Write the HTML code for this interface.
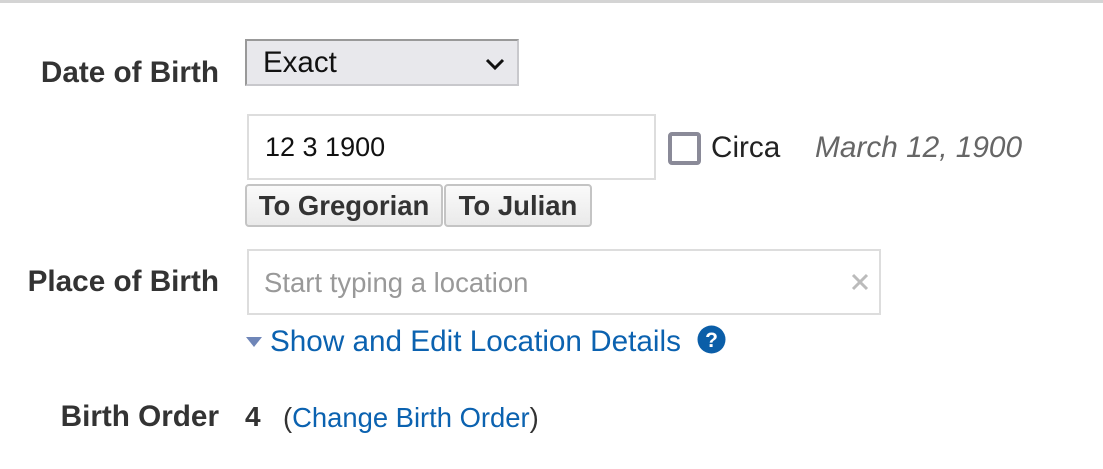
<!DOCTYPE html>
<html><head><style>
body{margin:0;width:1103px;height:469px;background:#fff;position:relative;overflow:hidden;font-family:"Liberation Sans",Arial,sans-serif;}
.a{position:absolute;white-space:nowrap;}
.lbl{font-weight:bold;font-size:29.7px;color:#333;right:884px;}
.box{position:absolute;box-sizing:border-box;border:2px solid #ddd;background:#fff;}
.btn{position:absolute;box-sizing:border-box;border:2px solid #c4c4c4;border-radius:4px;background:linear-gradient(#fafafa,#eaeaea);font-weight:bold;font-size:27.5px;color:#333;text-align:center;line-height:40px;}
.link{color:#0b62b0;}
</style></head><body>
<div class="a" style="left:0;top:0;width:1103px;height:3px;background:#d4d4d4"></div>

<div class="a lbl" style="top:56px">Date of Birth</div>
<div class="a" style="left:245px;top:39px;width:274px;height:47px;box-sizing:border-box;background:#e8e8ec;border:2px solid #c8c8cc;border-top-color:#999;border-left-color:#999;"></div>
<div class="a" style="left:263px;top:46px;font-size:29.5px;color:#111">Exact</div>
<svg class="a" style="left:485px;top:57px" width="20" height="14" viewBox="0 0 20 14"><path d="M2 3l8 8 8-8" fill="none" stroke="#111" stroke-width="3"/></svg>

<div class="box" style="left:247px;top:114px;width:409px;height:66px"></div>
<div class="a" style="left:265px;top:132px;font-size:27px;color:#111">12 3 1900</div>
<div class="a" style="left:668px;top:132px;width:33px;height:33px;box-sizing:border-box;border:4px solid #8a8a98;border-radius:4px"></div>
<div class="a" style="left:711px;top:131px;font-size:29.7px;color:#222">Circa</div>
<div class="a" style="left:815px;top:131px;font-size:29.8px;font-style:italic;color:#666">March 12, 1900</div>

<div class="btn" style="left:245px;top:184px;width:198px;height:43px">To Gregorian</div>
<div class="btn" style="left:444px;top:184px;width:148px;height:43px">To Julian</div>

<div class="a lbl" style="top:265px">Place of Birth</div>
<div class="box" style="left:247px;top:249px;width:634px;height:66px"></div>
<div class="a" style="left:264px;top:267px;font-size:27.5px;color:#999">Start typing a location</div>
<svg class="a" style="left:850px;top:272px" width="20" height="20" viewBox="0 0 20 20"><path d="M3 3l14 14M17 3L3 17" stroke="#bbb" stroke-width="3"/></svg>

<svg class="a" style="left:245px;top:336px" width="18" height="12" viewBox="0 0 18 12"><path d="M1 1h16L9 11z" fill="#6f86b8"/></svg>
<div class="a link" style="left:270px;top:325px;font-size:29.7px">Show and Edit Location Details</div>
<svg class="a" style="left:697px;top:325px" width="29" height="29" viewBox="0 0 29 29"><circle cx="14.5" cy="14.5" r="14" fill="#0b5ea8"/><text x="14.5" y="22" text-anchor="middle" font-family="Liberation Sans" font-weight="bold" font-size="21" fill="#fff">?</text></svg>

<div class="a lbl" style="top:400px">Birth Order</div>
<div class="a" style="left:245px;top:401px;font-size:28px;font-weight:bold;color:#333">4</div>
<div class="a" style="left:283px;top:402px;font-size:27.4px;color:#333">(<span class="link">Change Birth Order</span>)</div>
</body></html>
